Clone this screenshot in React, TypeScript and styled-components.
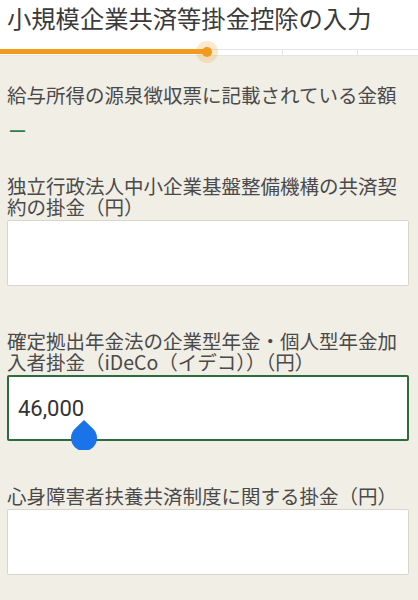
import React from "react";
import styled, { createGlobalStyle } from "styled-components";

const GlobalStyle = createGlobalStyle`
  html, body {
    margin: 0;
    padding: 0;
    background: #f1eee6;
  }
  body {
    font-family: "Noto Sans CJK JP", "Noto Sans", sans-serif;
    color: #444;
  }
`;

const Page = styled.div`
  width: 418px;
  min-height: 600px;
  background: #f1eee6;
`;

const Header = styled.header`
  background: #fff;
  padding-top: 3px;
`;

const Title = styled.h1`
  margin: 0 0 0 7px;
  font-size: 24.3px;
  line-height: 30px;
  font-weight: 400;
  color: #3a3a3a;
  white-space: nowrap;
`;

const Track = styled.div`
  position: relative;
  margin-top: 16px;
  height: 5px;
  border-top: 1px solid #e4e4e4;
  border-bottom: 1px solid #e4e4e4;
  display: flex;
  background: #fff;
`;

const Segment = styled.div<{ $width: number; $first?: boolean }>`
  flex: 0 0 ${(p) => p.$width}px;
  border-left: ${(p) => (p.$first ? "none" : "1px solid #e4e4e4")};
`;

const Fill = styled.div`
  position: absolute;
  left: 0;
  top: -1px;
  height: 5px;
  background: #f29a1d;
`;

const Thumb = styled.div`
  position: absolute;
  top: 1.5px;
  width: 10px;
  height: 10px;
  margin: -5px 0 0 -5px;
  border-radius: 50%;
  background: #f29a1d;
  box-shadow: 0 0 0 6px rgba(242, 154, 29, 0.22);
`;

const Main = styled.main`
  padding: 28px 9px 24px 7px;
`;

const Label = styled.div`
  font-size: 19.5px;
  line-height: 21px;
  color: #4a4a4a;
`;

const Value = styled.div`
  margin: 15px 0 0 1px;
  font-size: 19px;
  line-height: 21px;
  color: #2e7d4f;
`;

const Field = styled.div<{ $gap: number }>`
  margin-top: ${(p) => p.$gap}px;
`;

const InputWrap = styled.div`
  position: relative;
  margin-top: 3px;
`;

const Input = styled.div<{ $focused?: boolean }>`
  box-sizing: border-box;
  height: 66px;
  background: #fff;
  border: ${(p) => (p.$focused ? "2px solid #2d6a3e" : "1px solid #d8d5cd")};
  border-radius: 2px;
  display: flex;
  align-items: center;
  padding: 0 ${(p) => (p.$focused ? 9 : 10)}px;
  font-family: Roboto, "Noto Sans", sans-serif;
  font-size: 22px;
  color: #333;
`;

const Handle = styled.svg`
  position: absolute;
  left: 64px;
  top: 45px;
`;

const progress = 207;

export default function App() {
  return (
    <Page>
      <GlobalStyle />
      <Header>
        <Title>小規模企業共済等掛金控除の入力</Title>
        <Track>
          <Segment $width={282} $first />
          <Segment $width={74} />
          <Segment $width={62} />
          <Fill style={{ width: progress }} />
          <Thumb style={{ left: progress }} />
        </Track>
      </Header>
      <Main>
        <Label>給与所得の源泉徴収票に記載されている金額</Label>
        <Value>ー</Value>
        <Field $gap={34}>
          <Label>独立行政法人中小企業基盤整備機構の共済契約の掛金（円）</Label>
          <InputWrap>
            <Input />
          </InputWrap>
        </Field>
        <Field $gap={44}>
          <Label>確定拠出年金法の企業型年金・個人型年金加入者掛金（iDeCo（イデコ））（円）</Label>
          <InputWrap>
            <Input $focused>46,000</Input>
            <Handle width="26" height="30" viewBox="0 0 26 30">
              <path
                d="M13 0 L21.6 8.2 A13 13 0 1 1 4.4 8.2 Z"
                fill="#1a73e8"
              />
            </Handle>
          </InputWrap>
        </Field>
        <Field $gap={44}>
          <Label>心身障害者扶養共済制度に関する掛金（円）</Label>
          <InputWrap>
            <Input />
          </InputWrap>
        </Field>
      </Main>
    </Page>
  );
}
